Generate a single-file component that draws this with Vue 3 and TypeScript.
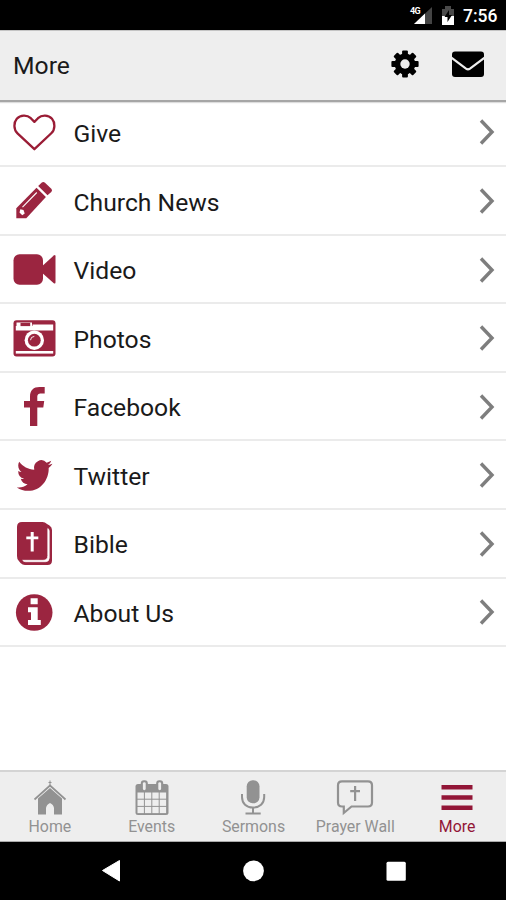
<script setup lang="ts">
import { ref } from 'vue'

interface Item {
  id: string
  label: string
}

const items: Item[] = [
  { id: 'give', label: 'Give' },
  { id: 'news', label: 'Church News' },
  { id: 'video', label: 'Video' },
  { id: 'photos', label: 'Photos' },
  { id: 'facebook', label: 'Facebook' },
  { id: 'twitter', label: 'Twitter' },
  { id: 'bible', label: 'Bible' },
  { id: 'about', label: 'About Us' },
]

const tabs: Item[] = [
  { id: 'home', label: 'Home' },
  { id: 'events', label: 'Events' },
  { id: 'sermons', label: 'Sermons' },
  { id: 'prayer', label: 'Prayer Wall' },
  { id: 'more', label: 'More' },
]

const active = ref('more')
</script>

<template>
  <div class="screen">
    <div class="status">
      <svg class="signal" width="24" height="20" viewBox="0 0 24 20">
        <path d="M5 19 23 2V19Z" fill="#444" />
        <path d="M5 19 16 8.500V19Z" fill="#fff" />
        <text x="1" y="9" class="net">4G</text>
      </svg>
      <svg class="battery" width="12" height="19" viewBox="0 0 12 19">
        <path d="M0 3H3V0H9V3H12V10H0Z" fill="#4a4a4a" />
        <path d="M0 10H12V19H0Z" fill="#fff" />
        <path d="M7 4 2.500 11H5.500V16L10 9H7Z" fill="#000" />
      </svg>
      <span class="clock">7:56</span>
    </div>

    <header class="header">
      <h1 class="title">More</h1>
      <svg class="gear" width="28" height="28" viewBox="-14 -14 28 28">
        <g fill="#000">
          <rect v-for="a in 4" :key="a" x="-2.900" y="-13.600" width="5.800" height="27.200" rx="1" :transform="`rotate(${a * 45})`" />
          <circle r="10.400" />
        </g>
        <circle r="4.700" fill="#eee" />
      </svg>
      <svg class="mail" width="32" height="26" viewBox="0 0 32 26">
        <rect y=".5" width="32" height="25.500" rx="3" />
        <path d="M-1 6.500 14 17.700Q16 19 18 17.700L33 6.500" fill="none" stroke="#eee" stroke-width="2.200" />
      </svg>
    </header>

    <ul class="list">
      <li v-for="item in items" :key="item.id" class="row">
        <svg class="icon" width="48" height="48" viewBox="0 0 48 48">
          <path v-if="item.id === 'give'" d="M24.400 41.200 7.500 25.300C3.400 21.300 3.600 14.500 6.800 10.800 10.500 6.700 17 6.600 20.800 10.200L24.400 13.900 28 10.200C31.800 6.600 38.300 6.700 42 10.800 45.200 14.500 45.400 21.300 41.300 25.300Z" fill="none" stroke="#9a1c35" stroke-width="2.300" stroke-linejoin="round" />
          <g v-else-if="item.id === 'news'">
            <path d="M6.300 42.200V32.200L26.500 11.800 35.900 21 16.300 42.200Z" />
            <path d="M28.200 10.100 31.800 6.600Q33.300 5.400 35 6.700L41.300 12.800Q42.800 14.300 41.300 16L37.500 19.300Z" />
            <path d="M12.500 31.200 26.800 16.500" stroke="#fff" stroke-width="1.100" />
            <path d="M10.300 33.200 13.500 34.100 14.700 37.500 12.300 39.200 9.500 36.400Z" fill="#fff" />
          </g>
          <g v-else-if="item.id === 'video'">
            <rect x="3.500" y="9.300" width="29.500" height="30.500" rx="6" />
            <path d="M32 21.300 43.800 10.500Q45.500 9.300 45.500 11.300V37.300Q45.500 39.300 43.800 38.200L32 27.800Z" />
          </g>
          <g v-else-if="item.id === 'photos'">
            <rect x="3.500" y="6.200" width="42" height="36.300" rx="3" />
            <path d="M5.800 12H22.500V10.500H43.200V16.500H5.800Z" fill="#fff" />
            <path d="M6.500 8.500H22V12H6.500Z" fill="#fff" />
            <rect x="10.500" y="8.900" width="9.700" height="3.200" />
            <rect x="5.800" y="37" width="37.400" height="2.600" fill="#fff" />
            <circle cx="24.300" cy="26.200" r="9.700" fill="#fff" />
            <circle cx="24.300" cy="26.200" r="6.400" />
            <path d="M20.500 26.200A4 4 0 0 1 24.300 22.400" fill="none" stroke="#fff" stroke-width=".9" />
          </g>
          <path v-else-if="item.id === 'facebook'" d="M20 44V25.600H14V18.900H20V14.500C20 8.300 23.500 5 29.500 5H34.700V11.600H31.300C28 11.600 27.300 13 27.300 15.500V18.900H34.200L33.300 25.600H27.300V44Z" />
          <path v-else-if="item.id === 'twitter'" transform="translate(6.800 5.700) scale(1.480 1.570)" d="M23.950 4.570a10 10 0 0 1-2.820.770 4.960 4.960 0 0 0 2.160-2.720c-.950.550-2 .950-3.130 1.180a4.920 4.920 0 0 0-8.380 4.480C7.690 8.090 4.070 6.130 1.640 3.160a4.820 4.820 0 0 0-.670 2.470c0 1.710.870 3.210 2.190 4.100a4.900 4.900 0 0 1-2.230-.620v.060a4.920 4.920 0 0 0 3.950 4.830 5 5 0 0 1-2.210.080 4.940 4.940 0 0 0 4.600 3.420A9.870 9.870 0 0 1 0 19.540a14 14 0 0 0 7.550 2.210c9.050 0 14-7.500 14-13.980 0-.210 0-.420-.020-.630a9.940 9.940 0 0 0 2.460-2.550z" />
          <g v-else-if="item.id === 'bible'">
            <path d="M12 3H32.500Q35 3 37 5L39.500 6.500Q42 8 42 11V41.500Q42 46 37.500 46H15Q12.500 46 10.500 44L8.500 41.500Q7 40 7 37V8Q7 3 12 3Z" />
            <path d="M37.800 9.500Q39.200 10.300 39.200 12V39Q39.200 42.700 35.500 42.700H15.500Q13.500 42.700 12.700 41.300H33Q37.800 41.300 37.800 36.500Z" fill="#fff" stroke="#fff" stroke-width=".7" />
            <path d="M20.700 13H23.700V17.500H28.300V20.300H23.700V32.500H20.700V20.300H16.300V17.500H20.700Z" fill="#fff" />
          </g>
          <g v-else>
            <circle cx="24.200" cy="24.500" r="18.300" />
            <path d="M20.600 10.200H27.700V16.200H20.600ZM18 19.300H27.700V32H30.800V36.900H18V32H21V24.300H18Z" fill="#fff" />
          </g>
        </svg>
        <span class="label">{{ item.label }}</span>
        <svg class="chevron" width="18" height="28" viewBox="0 0 18 28">
          <path d="M3 2.500 14 14 3 25.500" fill="none" stroke="#7e7e7e" stroke-width="3.400" />
        </svg>
      </li>
    </ul>

    <nav class="tabs">
      <button v-for="tab in tabs" :key="tab.id" class="tab" :class="{ active: active === tab.id }" @click="active = tab.id">
        <svg class="tab-icon" width="40" height="40" viewBox="0 0 40 40">
          <g v-if="tab.id === 'home'">
            <path d="M19.500 1.500H20.500V3H21.500V4H20.500V8H19.500V4H18.500V3H19.500Z" />
            <path d="M4.500 20.500 20 6.500 35.500 20.500" fill="none" stroke="currentColor" stroke-width="1.700" />
            <path d="M8 19.500 20 9 32 19.500V35.500H24V29Q23.500 25.500 20 24 16.500 25.500 16 29V35.500H8Z" />
          </g>
          <g v-else-if="tab.id === 'events'">
            <rect x="3.500" y="5" width="33" height="31" rx="2.500" />
            <g fill="#eee">
              <template v-for="r in 3" :key="r">
                <rect v-for="c in 4" :key="c" :x="5.500 + (c - 1) * 7.400" :y="13.500 + (r - 1) * 7.200" width="6.400" height="6.200" />
              </template>
            </g>
            <rect x="8.800" y="1.300" width="7" height="11.500" rx="3" />
            <rect x="24.200" y="1.300" width="7" height="11.500" rx="3" />
            <rect x="10.900" y="3.200" width="2.800" height="8" rx="1.400" fill="#eee" />
            <rect x="26.300" y="3.200" width="2.800" height="8" rx="1.400" fill="#eee" />
          </g>
          <g v-else-if="tab.id === 'sermons'">
            <rect x="13.700" y="1.200" width="12.800" height="23" rx="6" />
            <path d="M9 15V18C9 24.500 13.500 28.500 20 28.500S31.200 24.500 31.200 18V15M20 28.500V34.500M12.500 34.500H27.700" fill="none" stroke="currentColor" stroke-width="2" />
          </g>
          <g v-else-if="tab.id === 'prayer'">
            <path d="M7 2.300H33Q37 2.300 37 6.300V23.500Q37 27.500 33 27.500H16.500L8.800 34V27.500H7Q3 27.500 3 23.500V6.300Q3 2.300 7 2.300Z" fill="none" stroke="currentColor" stroke-width="2.200" />
            <path d="M19 7H21.200V11H25V13.200H21.200V22H19V13.200H15.200V11H19Z" />
          </g>
          <path v-else d="M4.500 6H35.500V10.500H4.500ZM4.500 16.300H35.500V20.800H4.500ZM4.500 26.600H35.500V31.100H4.500Z" />
        </svg>
        <span class="tab-label">{{ tab.label }}</span>
      </button>
    </nav>

    <div class="system">
      <svg width="20" height="24" viewBox="0 0 20 24"><path d="M1.500 11.500 18.500 1.500V22Z" fill="#fff" stroke="#fff" stroke-linejoin="round" /></svg>
      <svg width="22" height="22" viewBox="0 0 22 22"><circle cx="10.500" cy="10.800" r="10.400" fill="#fff" /></svg>
      <svg width="20" height="20" viewBox="0 0 20 20"><rect x=".5" y=".7" width="19.300" height="19" rx="1.500" fill="#fff" /></svg>
    </div>
  </div>
</template>

<style>
body {
  margin: 0;
  background: #fff;
}
</style>

<style scoped>
.screen {
  display: flex;
  flex-direction: column;
  width: 506px;
  height: 900px;
  overflow: hidden;
  background: #fff;
  color: #1a1a1a;
  font-family: Roboto, 'Liberation Sans', sans-serif;
}
.status {
  display: flex;
  flex: none;
  align-items: center;
  justify-content: flex-end;
  box-sizing: border-box;
  height: 30px;
  padding-right: 10px;
  background: #000;
  color: #fff;
}
.signal {
  margin: 0 9px 0 0;
}
.net {
  fill: #fff;
  font-size: 9px;
  font-weight: 700;
  letter-spacing: -0.600px;
}
.battery {
  margin: 1px 9px 0 0;
}
.clock {
  width: 33px;
  padding-top: 2px;
  font-size: 17.500px;
  font-weight: 500;
  line-height: 30px;
  white-space: nowrap;
}
.header {
  display: flex;
  flex: none;
  align-items: center;
  box-sizing: border-box;
  height: 72px;
  padding: 0 22px 3px 13px;
  border-top: 1px solid #c4c4c4;
  border-bottom: 2px solid #a6a6a6;
  box-shadow: 0 1px 1px #ddd;
  background: #eee;
}
.title {
  flex: 1;
  margin: 3px 0 0;
  font-size: 24.700px;
  font-weight: 400;
  line-height: 30px;
}
.gear {
  margin-right: 33px;
}
.list {
  flex: 1;
  margin: -3.400px 0 0;
  padding: 0;
  list-style: none;
}
.row {
  display: flex;
  align-items: center;
  box-sizing: border-box;
  height: 68.570px;
  padding: 0 10px;
  border-bottom: 2px solid #ebebeb;
}
.icon {
  fill: #9b2540;
}
.label {
  flex: 1;
  padding: 4.400px 0 0 15.500px;
  font-size: 24.700px;
  line-height: 30px;
}
.chevron {
  margin-top: 1px;
}
.tabs {
  display: flex;
  flex: none;
  box-sizing: border-box;
  height: 72px;
  margin: 0 -2px 0 -1px;
  border-top: 2px solid #d4d4d4;
  border-bottom: 1px solid #aaa;
  background: #eee;
}
.tab {
  display: flex;
  flex: 1 0 0;
  flex-direction: column;
  align-items: center;
  padding: 7px 0 0;
  border: 0;
  background: none;
  color: #929292;
  font-family: inherit;
}
.tab.active {
  color: #921637;
}
.tab-icon {
  flex: none;
  fill: currentColor;
}
.tab-label {
  margin-top: -2px;
  font-size: 15.900px;
  line-height: 20px;
  white-space: nowrap;
}
.system {
  display: flex;
  flex: none;
  align-items: center;
  justify-content: space-between;
  box-sizing: border-box;
  height: 58px;
  padding: 0 100px 0 101px;
  background: #000;
}
</style>
